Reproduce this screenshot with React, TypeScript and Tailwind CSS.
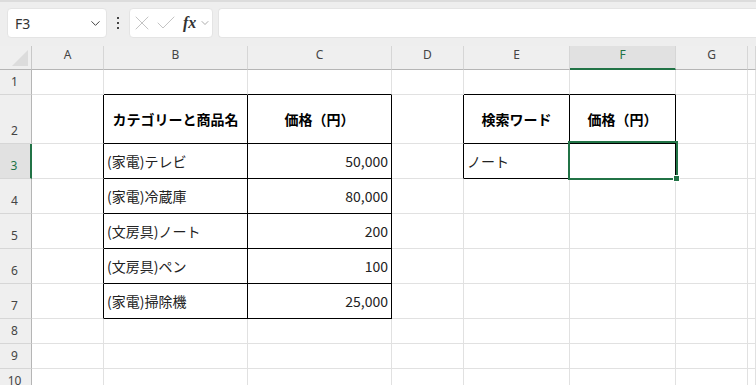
import React from 'react';
import { ChevronDown, X, Check } from 'lucide-react';

const COLS = ['A', 'B', 'C', 'D', 'E', 'F', 'G', ''];
const ROWS = [1, 2, 3, 4, 5, 6, 7, 8, 9, 10];

type Cell = { text: string; align?: 'left' | 'right' | 'center'; bold?: boolean };

const cells: Record<string, Cell> = {
    B2: { text: 'カテゴリーと商品名', align: 'center', bold: true },
    C2: { text: '価格（円）', align: 'center', bold: true },
    B3: { text: '(家電)テレビ' },
    C3: { text: '50,000', align: 'right' },
    B4: { text: '(家電)冷蔵庫' },
    C4: { text: '80,000', align: 'right' },
    B5: { text: '(文房具)ノート' },
    C5: { text: '200', align: 'right' },
    B6: { text: '(文房具)ペン' },
    C6: { text: '100', align: 'right' },
    B7: { text: '(家電)掃除機' },
    C7: { text: '25,000', align: 'right' },
    E2: { text: '検索ワード', align: 'center', bold: true },
    F2: { text: '価格（円）', align: 'center', bold: true },
    E3: { text: 'ノート' },
};

// ranges that carry a thin black border: [colFrom, colTo, rowFrom, rowTo]
const tables = [
    [1, 2, 2, 7],
    [4, 5, 2, 3],
];

const inTable = (c: number, r: number) =>
    tables.some(([c1, c2, r1, r2]) => c >= c1 && c <= c2 && r >= r1 && r <= r2);

const SheetCell = ({ c, r }: { c: number; r: number }) => {
    const key = COLS[c] + r;
    const cell = cells[key];
    const right = inTable(c, r) || inTable(c + 1, r);
    const bottom = inTable(c, r) || inTable(c, r + 1);
    const selected = key === 'F3';

    return (
        <div
            className={`relative flex items-center border-r border-b px-[3px] text-[14px] text-[#222] whitespace-nowrap ${
                right ? 'border-r-black' : 'border-r-[#e1e1e1]'
            } ${bottom ? 'border-b-black' : 'border-b-[#e1e1e1]'} ${
                cell?.align === 'right'
                    ? 'justify-end'
                    : cell?.align === 'center'
                      ? 'justify-center'
                      : 'justify-start'
            } ${cell?.bold ? 'font-bold text-[14.5px] text-black' : ''}`}
        >
            {cell?.text}
            {selected && (
                <div className="absolute -left-[2px] -top-[3px] -right-[3px] -bottom-[2px] z-10 border-2 border-[#217346]">
                    <div className="absolute -right-[4px] -bottom-[4px] w-[7px] h-[7px] bg-[#217346] border border-white"></div>
                </div>
            )}
        </div>
    );
};

export default function App() {
    return (
        <div className="w-[756px] h-[385px] overflow-hidden bg-white font-['Noto_Sans_CJK_JP',sans-serif]">
            {/* formula bar */}
            <div className="h-[46px] bg-[#eeeeee] border-t-2 border-[#dcdcdc] flex items-start pt-[6px]">
                <div className="ml-[7px] w-[100px] h-[30px] bg-white rounded-[4px] border border-[#e4e4e4] flex items-center justify-between pl-[7px] pr-[3px]">
                    <span className="font-['Noto_Sans',sans-serif] text-[14px] text-[#333]">F3</span>
                    <ChevronDown size={15} strokeWidth={1.6} className="text-[#444]" />
                </div>
                <div className="w-[22px] h-[30px] flex flex-col items-center justify-center gap-[3px]">
                    <div className="w-[2px] h-[2px] bg-[#444]"></div>
                    <div className="w-[2px] h-[2px] bg-[#444]"></div>
                    <div className="w-[2px] h-[2px] bg-[#444]"></div>
                </div>
                <div className="w-[84px] h-[30px] bg-white rounded-[4px] border border-[#e4e4e4] flex items-center">
                    <X size={24} strokeWidth={1} className="text-[#c4c4c4]" />
                    <Check size={24} strokeWidth={1} className="text-[#c4c4c4]" />
                    <span className="ml-[5px] font-['Liberation_Serif',serif] italic font-bold text-[16px] text-[#333] leading-none">
                        fx
                    </span>
                    <ChevronDown size={12} strokeWidth={1.4} className="ml-[3px] text-[#888]" />
                </div>
                <div className="ml-[5px] flex-1 h-[30px] bg-white rounded-l-[4px] border border-r-0 border-[#e4e4e4]"></div>
            </div>

            {/* sheet */}
            <div className="grid grid-cols-[32px_72px_144px_144px_72px_106px_106px_72px_1fr] grid-rows-[24px_25px_49px_35px_35px_35px_35px_35px_25px_25px_25px]">
                {/* corner */}
                <div className="bg-[#efefef] border-r border-b border-r-[#c8c8c8] border-b-[#b5b5b5] flex items-end justify-end p-[3px]">
                    <svg width="16" height="16" viewBox="0 0 16 16">
                        <polygon points="16,0 16,16 0,16" fill="#dcdcdc" />
                    </svg>
                </div>
                {COLS.map((col, i) => (
                    <div
                        key={i}
                        className={`flex justify-center pt-[1px] font-['Noto_Sans',sans-serif] text-[12px] leading-[16px] border-r border-r-[#d6d6d6] ${
                            col === 'F'
                                ? 'bg-[#e1e1e1] text-[#217346] border-b-2 border-b-[#217346]'
                                : 'bg-[#efefef] text-[#444] border-b border-b-[#b5b5b5]'
                        }`}
                    >
                        {col}
                    </div>
                ))}

                {ROWS.map((r) => (
                    <React.Fragment key={r}>
                        <div
                            className={`flex items-end justify-center pb-[2px] pr-[2px] font-['Noto_Sans',sans-serif] text-[12px] leading-[20px] border-b border-b-[#d6d6d6] ${
                                r === 3
                                    ? 'bg-[#e1e1e1] text-[#217346] border-r-2 border-r-[#217346]'
                                    : 'bg-[#efefef] text-[#444] border-r border-r-[#b5b5b5]'
                            }`}
                        >
                            {r}
                        </div>
                        {COLS.map((_, c) => (
                            <SheetCell key={c} c={c} r={r} />
                        ))}
                    </React.Fragment>
                ))}
            </div>
        </div>
    );
}
